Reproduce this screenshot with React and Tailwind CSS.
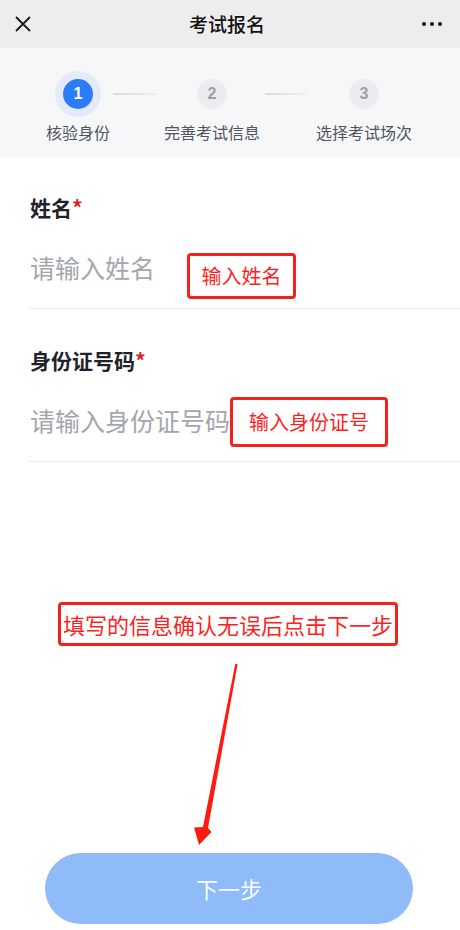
import React from 'react';

const steps = [
    { n: 1, label: '核验身份', active: true },
    { n: 2, label: '完善考试信息' },
    { n: 3, label: '选择考试场次' },
];

const Field = ({ label, placeholder, note, noteBox, first }) => (
    <div className={`border-b border-[#eeeeee] pb-[25px] ${first ? 'pt-[36px]' : 'pt-[37px]'}`}>
        <div className="pl-[2px] text-[21px] leading-[28px] font-bold text-[#1f2329]">
            {label}
            <span className="text-[#e01e1e]">*</span>
        </div>
        <div className="relative mt-[30px] pl-[2px] text-[25px] leading-[32px] text-[#a3a6ab]">
            {placeholder}
            <div className={`absolute flex items-center justify-center border-[3px] border-[#f5221b] rounded-[4px] text-[20px] text-[#ff1f1f] ${noteBox}`}>
                {note}
            </div>
        </div>
    </div>
);

export default function App() {
    return (
        <div className="w-[460px] h-[930px] bg-white flex flex-col overflow-hidden font-['Noto_Sans_CJK_SC','Noto_Sans',sans-serif]">
            {/* header */}
            <div className="h-12 shrink-0 bg-[#ededed] flex items-center justify-between px-[13px]">
                <svg width="18" height="18" viewBox="0 0 18 18" className="ml-[1px]">
                    <path d="M2 2 L16 16 M16 2 L2 16" stroke="#1a1a1a" strokeWidth="1.8" />
                </svg>
                <span className="text-[19px] font-medium text-[#111]">考试报名</span>
                <div className="flex gap-[4px] mr-[5px]">
                    <span className="w-[4px] h-[4px] rounded-full bg-[#111]" />
                    <span className="w-[4px] h-[4px] rounded-full bg-[#111]" />
                    <span className="w-[4px] h-[4px] rounded-full bg-[#111]" />
                </div>
            </div>

            {/* steps */}
            <div className="h-[109px] shrink-0 bg-[#f6f7f9] pt-[23px] flex">
                {steps.map((s, i) => (
                    <div
                        key={s.n}
                        className={`relative w-24 flex flex-col items-center ${i === 0 ? 'ml-[30px]' : i === 1 ? 'ml-[38px]' : 'ml-[56px]'}`}
                    >
                        <div className={`w-[46px] h-[46px] rounded-full flex items-center justify-center ${s.active ? 'bg-[#e3ebfa]' : ''}`}>
                            <div
                                className={`w-[30px] h-[30px] rounded-full flex items-center justify-center font-['Liberation_Sans',sans-serif] font-bold text-[16px] ${s.active ? 'bg-[#2b7cf6] text-white' : 'bg-[#ebecef] text-[#9c9fa6]'}`}
                            >
                                {s.n}
                            </div>
                        </div>
                        <div className="mt-[4px] text-[16px] leading-[22px] text-[#50545c] whitespace-nowrap">{s.label}</div>
                        {i === 0 && <div className="absolute top-[22px] left-[83px] w-[44px] h-[2px] bg-linear-to-r from-[#d6d9de] to-[#eef0f3]" />}
                        {i === 1 && <div className="absolute top-[22px] left-[101px] w-[42px] h-[2px] bg-linear-to-r from-[#d6d9de] to-[#eef0f3]" />}
                    </div>
                ))}
            </div>

            {/* form */}
            <div className="ml-[28px]">
                <Field
                    first
                    label="姓名"
                    placeholder="请输入姓名"
                    note="输入姓名"
                    noteBox="top-[2px] left-[159px] w-[109px] h-[46px]"
                />
                <Field
                    label="身份证号码"
                    placeholder="请输入身份证号码"
                    note="输入身份证号"
                    noteBox="top-[-7px] left-[202px] w-[158px] h-[50px]"
                />
            </div>

            {/* tip */}
            <div className="mt-[140px] ml-[58px] w-[340px] h-[44px] border-[3px] border-[#f5221b] rounded-[4px] flex items-center justify-center text-[22px] text-[#ff1f1f] whitespace-nowrap">
                填写的信息确认无误后点击下一步
            </div>
            <svg width="460" height="207" viewBox="0 0 460 207" className="block shrink-0">
                <polygon points="235.3,18 237.6,18 208,182 211.5,186 199,199 194,181.5 203,181" fill="#ff1a10" />
            </svg>

            <button className="ml-[45px] w-[368px] h-[71px] shrink-0 rounded-full bg-[#8fbcf8] text-[22px] text-white/95">
                下一步
            </button>
        </div>
    );
}
